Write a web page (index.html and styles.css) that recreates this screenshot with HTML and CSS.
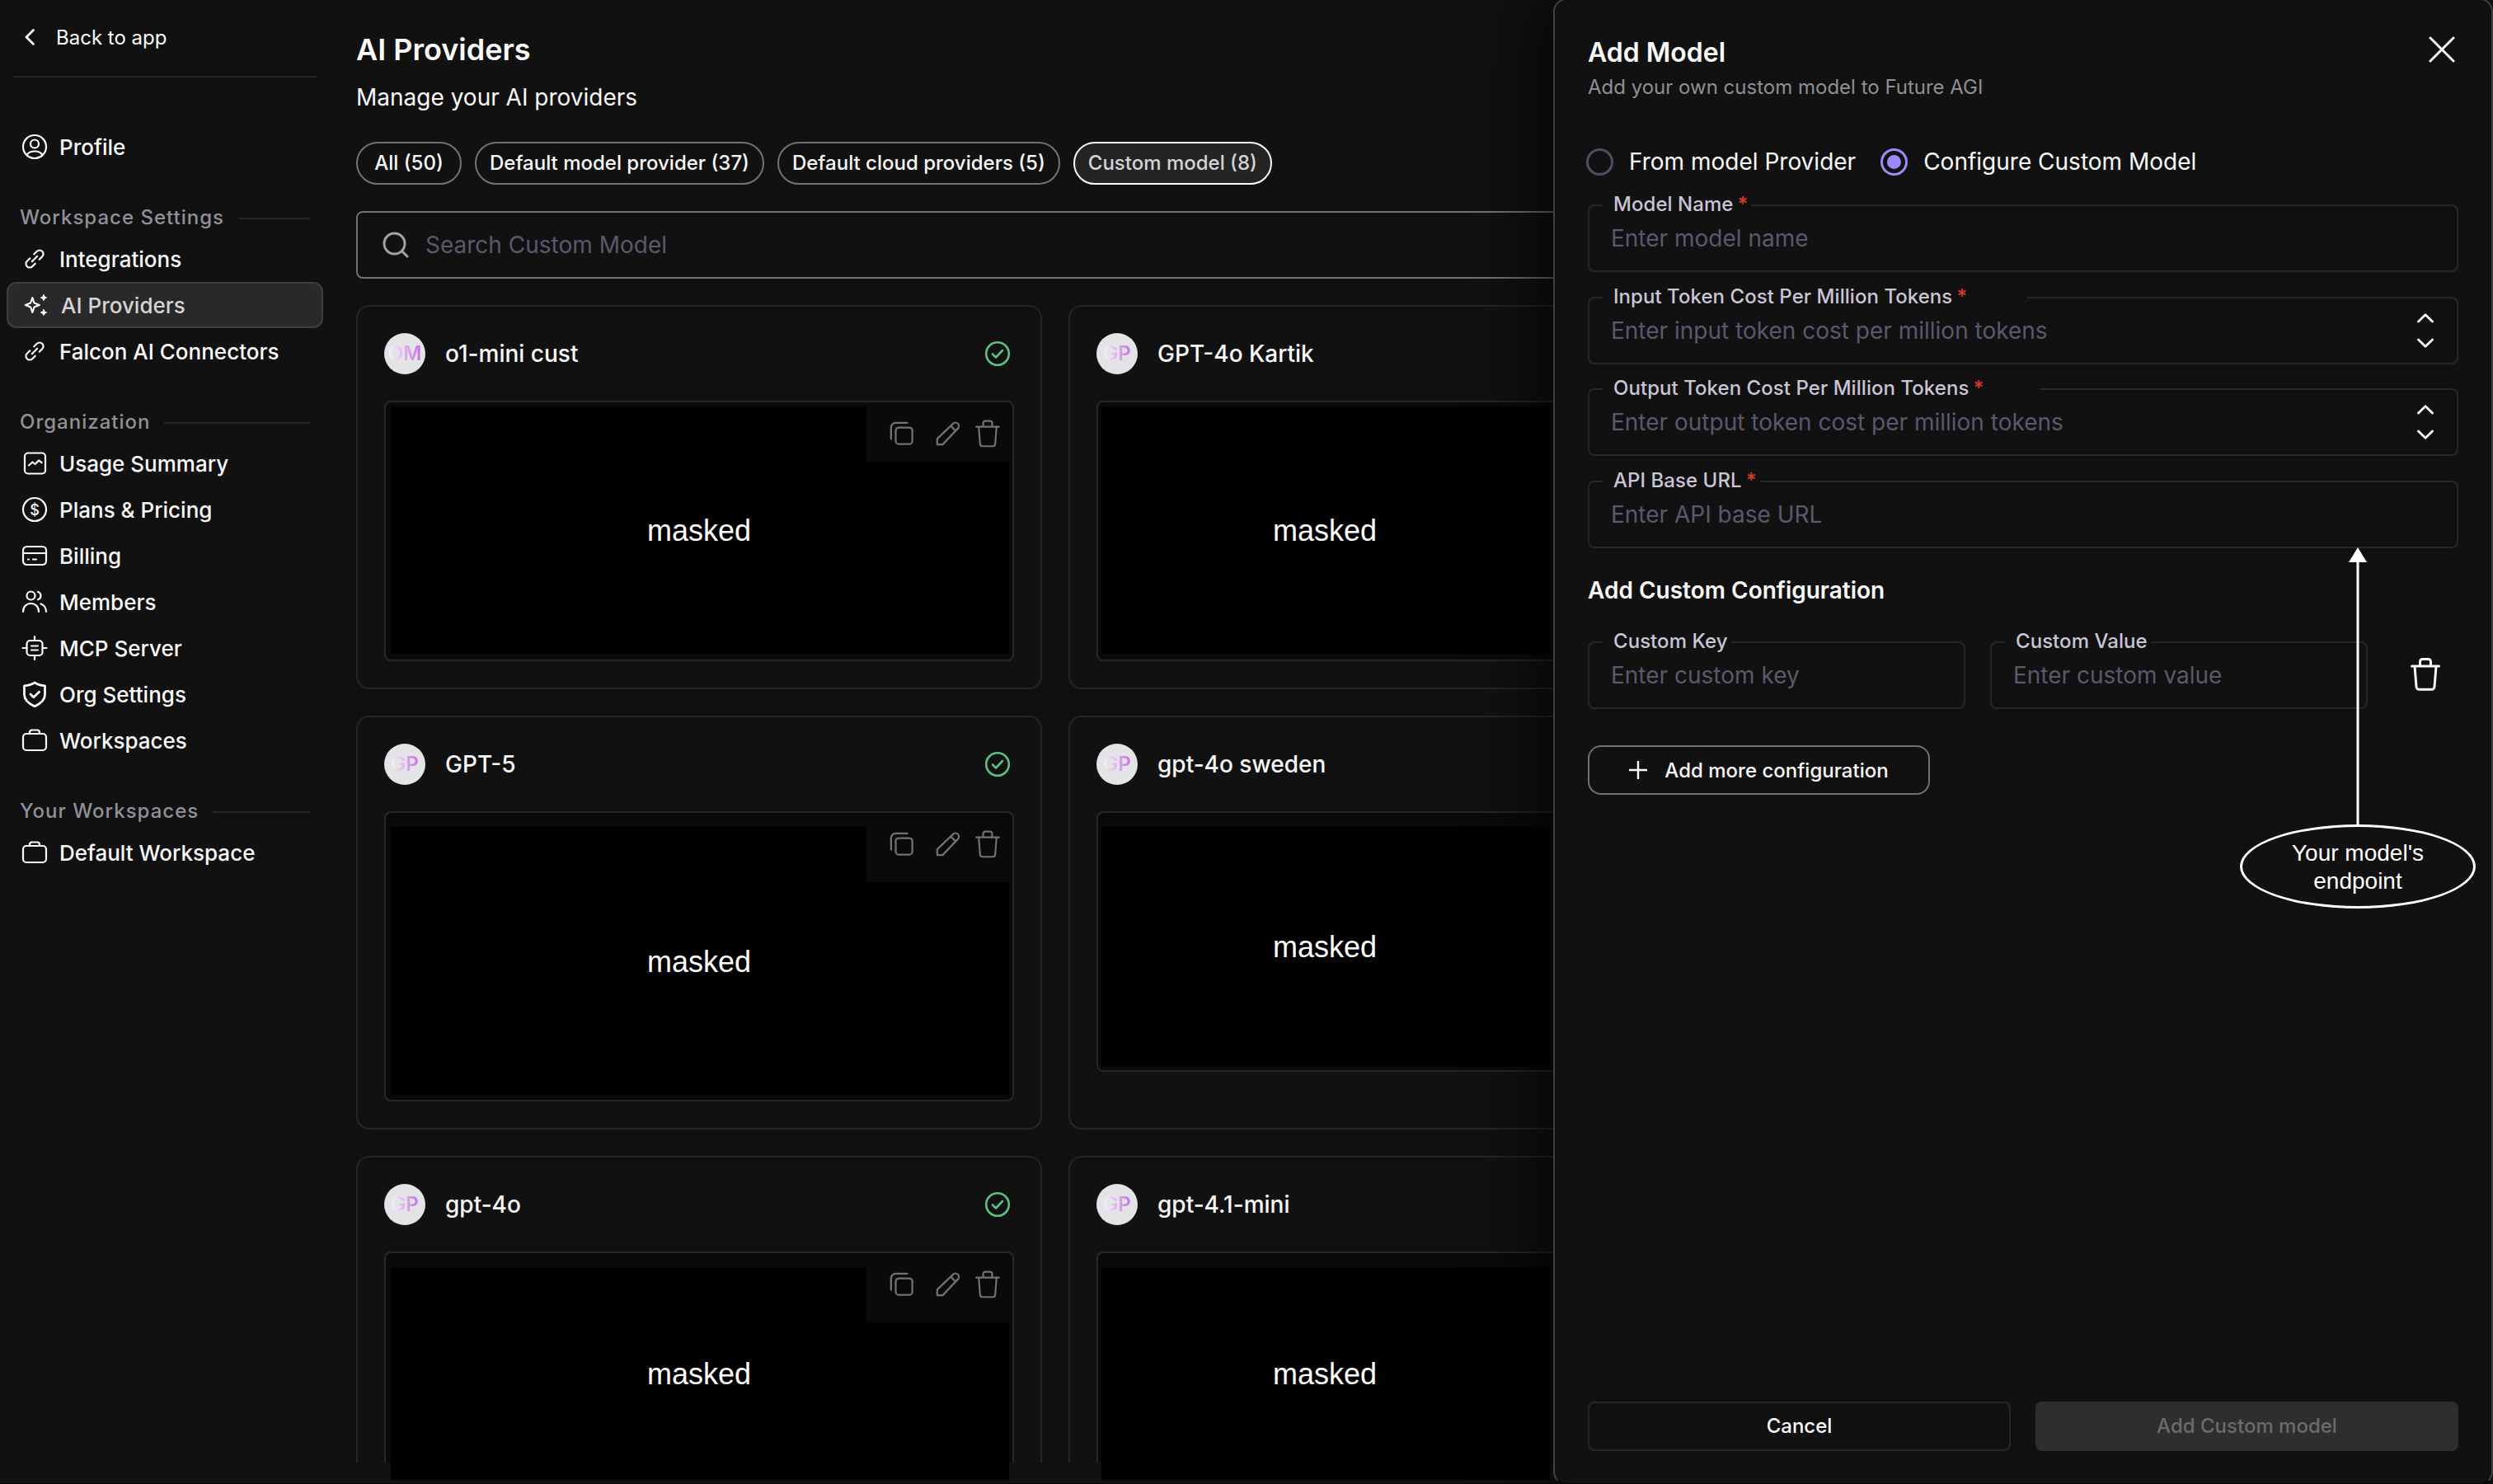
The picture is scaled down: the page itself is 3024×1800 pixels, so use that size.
FILE: index.html
```html
<!DOCTYPE html>
<html lang="en">
<head>
  <meta charset="UTF-8">
  <meta name="viewport" content="width=device-width, initial-scale=1.0">
  <title>AI Providers</title>
  <link rel="stylesheet" href="styles.css">
</head>
<body>
  <!-- icon sprite -->
  <svg class="sprite" width="0" height="0">
    <symbol id="i-link" viewBox="0 0 32 32">
      <g transform="rotate(-45 16 16)">
        <path d="M12.500 20.500H7.500a4.500 4.500 0 0 1 0-9h5"/>
        <path d="M19.500 11.500h5a4.500 4.500 0 0 1 0 9h-5"/>
        <path d="M11.500 16h9"/>
      </g>
    </symbol>
    <symbol id="i-case" viewBox="0 0 32 32">
      <rect x="2" y="8" width="28" height="20" rx="4"/>
      <path d="M10 8V6.500a3 3 0 0 1 3-3h6a3 3 0 0 1 3 3V8"/>
    </symbol>
    <symbol id="i-check" viewBox="0 0 32 32">
      <circle cx="16" cy="16" r="13.800"/>
      <path d="M10 16.500l4 4 8-8.500"/>
    </symbol>
    <symbol id="i-copy" viewBox="0 0 32 32">
      <path d="M2 23V8a6 6 0 0 1 6-6h15"/>
      <rect x="8" y="8" width="21.500" height="21.500" rx="4"/>
    </symbol>
    <symbol id="i-pencil" viewBox="0 0 32 32">
      <path d="M2 30v-7.500L22.500 3a4.300 4.300 0 0 1 6.200 6.200L9 30H2zM19.500 6l6.500 6.500"/>
    </symbol>
    <symbol id="i-trash" viewBox="0 0 36 40">
      <path d="M1.500 10h33M5 10l2 25a3.500 3.500 0 0 0 3.500 3.300h15a3.500 3.500 0 0 0 3.500-3.300l2-25M11.500 10V4.500a3 3 0 0 1 3-3h7a3 3 0 0 1 3 3V10"/>
    </symbol>
    <symbol id="i-spin" viewBox="0 0 20 42">
      <path d="M1.500 10L10 1.800l8.500 8.200M1.500 32l8.500 8.200 8.500-8.200"/>
    </symbol>
  </svg>

  <aside class="sidebar">
    <a class="back">
      <svg class="back-icon" viewBox="0 0 12 20"><path d="M10.500 1.500L2 10l8.500 8.500"/></svg>
      Back to app
    </a>
    <nav class="nav">
      <a class="nav-item">
        <svg class="icon" viewBox="0 0 32 32">
          <circle cx="16" cy="16" r="14"/><circle cx="16" cy="12.500" r="5"/>
          <path d="M6.500 26c2-3.500 5-4.500 9.500-4.500s7.500 1 9.500 4.500"/>
        </svg>
        Profile
      </a>

      <div class="nav-label">Workspace Settings</div>
      <a class="nav-item"><svg class="icon"><use href="#i-link"/></svg>Integrations</a>
      <a class="nav-item active">
        <svg class="icon" viewBox="0 0 32 32">
          <path d="M13.300 7.200l2.200 6.300 6.300 2.500-6.300 2.500-2.200 6.300-2.200-6.300L4.800 16l6.300-2.500z"/>
          <path class="solid" d="M27 3.500l1.200 2.400L30.600 7l-2.400 1.200L27 10.500l-1.200-2.300L23.400 7l2.400-1.100zM27 21.500l1.200 2.400 2.400 1.100-2.400 1.200-1.200 2.300-1.200-2.300-2.400-1.200 2.400-1.100z"/>
        </svg>
        AI Providers
      </a>
      <a class="nav-item"><svg class="icon"><use href="#i-link"/></svg>Falcon AI Connectors</a>

      <div class="nav-label">Organization</div>
      <a class="nav-item">
        <svg class="icon" viewBox="0 0 32 32">
          <rect x="4" y="3.500" width="25" height="25" rx="4"/>
          <path d="M9 18.500l4.500-4 3 2.500 4.500-4.500 3.500 2.500"/>
        </svg>
        Usage Summary
      </a>
      <a class="nav-item">
        <svg class="icon" viewBox="0 0 32 32"><circle cx="16" cy="16" r="14"/><text x="16" y="22.500">$</text></svg>
        Plans &amp; Pricing
      </a>
      <a class="nav-item">
        <svg class="icon" viewBox="0 0 32 32">
          <rect x="2" y="5" width="28" height="22" rx="4.500"/><path d="M2 13h28M8 20.500h1M14 20.500h4"/>
        </svg>
        Billing
      </a>
      <a class="nav-item">
        <svg class="icon" viewBox="0 0 32 32">
          <circle cx="11.500" cy="8.500" r="5"/>
          <path d="M2 28c0-6 4-10 9.500-10s9.500 4 9.500 10M20 3.800a5 5 0 0 1 0 9.500M23.500 18.500c4 1.500 6.500 5 6.500 9.500"/>
        </svg>
        Members
      </a>
      <a class="nav-item">
        <svg class="icon" viewBox="0 0 32 32">
          <rect x="6.500" y="7" width="19" height="18" rx="4"/>
          <path d="M12 13.500h8M12 18.500h8M16 2v5M16 25v5M1.500 16h5M25.500 16h5"/>
        </svg>
        MCP Server
      </a>
      <a class="nav-item">
        <svg class="icon bold" viewBox="0 0 32 32">
          <path d="M16 1.800c4 2.700 8 3.700 12.500 4v11c0 6.500-5.500 10.700-12.500 14-7-3.300-12.500-7.500-12.500-14v-11c4.500-.300 8.500-1.300 12.500-4zM11 16l3.800 3.800 6.700-6.500"/>
        </svg>
        Org Settings
      </a>
      <a class="nav-item"><svg class="icon"><use href="#i-case"/></svg>Workspaces</a>

      <div class="nav-label">Your Workspaces</div>
      <a class="nav-item"><svg class="icon"><use href="#i-case"/></svg>Default Workspace</a>
    </nav>
  </aside>

  <main class="main">
    <h1 class="title">AI Providers</h1>
    <p class="subtitle">Manage your AI providers</p>
    <div class="chips">
      <button class="chip">All (50)</button>
      <button class="chip">Default model provider (37)</button>
      <button class="chip">Default cloud providers (5)</button>
      <button class="chip selected">Custom model (8)</button>
    </div>
    <div class="search">
      <svg class="search-icon" viewBox="0 0 32 32"><circle cx="14.500" cy="14.500" r="12.500"/><path d="M23.500 23.500l6.500 6.500"/></svg>
      <span>Search Custom Model</span>
    </div>

    <div class="cards">
      <section class="card">
        <header class="card-head">
          <span class="avatar"><b>OM</b></span><span class="name">o1-mini cust</span>
          <svg class="check"><use href="#i-check"/></svg>
        </header>
        <div class="code">
          <div class="mask notched">masked</div>
          <div class="actions">
            <svg class="copy"><use href="#i-copy"/></svg>
            <svg class="pencil"><use href="#i-pencil"/></svg>
            <svg class="trash"><use href="#i-trash"/></svg>
          </div>
        </div>
      </section>
      <section class="card">
        <header class="card-head">
          <span class="avatar"><b>GP</b></span><span class="name">GPT-4o Kartik</span>
        </header>
        <div class="code"><div class="mask narrow">masked</div></div>
      </section>

      <section class="card">
        <header class="card-head">
          <span class="avatar"><b>GP</b></span><span class="name">GPT-5</span>
          <svg class="check"><use href="#i-check"/></svg>
        </header>
        <div class="code tall">
          <div class="mask notched">masked</div>
          <div class="actions">
            <svg class="copy"><use href="#i-copy"/></svg>
            <svg class="pencil"><use href="#i-pencil"/></svg>
            <svg class="trash"><use href="#i-trash"/></svg>
          </div>
        </div>
      </section>
      <section class="card">
        <header class="card-head">
          <span class="avatar"><b>GP</b></span><span class="name">gpt-4o sweden</span>
        </header>
        <div class="code lower"><div class="mask narrow">masked</div></div>
      </section>

      <section class="card cut">
        <header class="card-head">
          <span class="avatar"><b>GP</b></span><span class="name">gpt-4o</span>
          <svg class="check"><use href="#i-check"/></svg>
        </header>
        <div class="code open">
          <div class="mask notched">masked</div>
          <div class="actions">
            <svg class="copy"><use href="#i-copy"/></svg>
            <svg class="pencil"><use href="#i-pencil"/></svg>
            <svg class="trash"><use href="#i-trash"/></svg>
          </div>
        </div>
      </section>
      <section class="card cut">
        <header class="card-head">
          <span class="avatar"><b>GP</b></span><span class="name">gpt-4.1-mini</span>
        </header>
        <div class="code open"><div class="mask narrow">masked</div></div>
      </section>
    </div>
  </main>

  <aside class="drawer">
    <header class="drawer-head">
      <div>
        <h2 class="drawer-title">Add Model</h2>
        <p class="drawer-sub">Add your own custom model to Future AGI</p>
      </div>
      <svg class="close" viewBox="0 0 32 32"><path d="M2 2l28 28M30 2L2 30"/></svg>
    </header>

    <div class="radios">
      <span class="radio"></span><span class="radio-text">From model Provider</span>
      <span class="radio on"></span><span class="radio-text">Configure Custom Model</span>
    </div>

    <div class="fields">
      <fieldset class="field">
        <legend>Model Name<i>*</i></legend>
        <span>Enter model name</span>
      </fieldset>
      <fieldset class="field">
        <legend class="wide-in">Input Token Cost Per Million Tokens<i>*</i></legend>
        <span>Enter input token cost per million tokens</span>
        <svg class="spin"><use href="#i-spin"/></svg>
      </fieldset>
      <fieldset class="field">
        <legend class="wide-out">Output Token Cost Per Million Tokens<i>*</i></legend>
        <span>Enter output token cost per million tokens</span>
        <svg class="spin"><use href="#i-spin"/></svg>
      </fieldset>
      <fieldset class="field">
        <legend>API Base URL<i>*</i></legend>
        <span>Enter API base URL</span>
      </fieldset>
    </div>

    <h3 class="section">Add Custom Configuration</h3>
    <div class="pair">
      <fieldset class="field">
        <legend>Custom Key</legend>
        <span>Enter custom key</span>
      </fieldset>
      <fieldset class="field">
        <legend>Custom Value</legend>
        <span>Enter custom value</span>
      </fieldset>
      <svg class="remove"><use href="#i-trash"/></svg>
    </div>
    <button class="add-more">
      <svg class="plus" viewBox="0 0 22 22"><path d="M11 0v22M0 11h22"/></svg>
      Add more configuration
    </button>

    <footer class="drawer-foot">
      <button class="btn">Cancel</button>
      <button class="btn disabled">Add Custom model</button>
    </footer>
  </aside>

  <!-- callout pointing at the API Base URL field -->
  <div class="callout">
    <svg class="arrow" viewBox="0 0 22 338"><path class="head" d="M11 0l11 18H0z"/><path d="M11 16v322"/></svg>
    <div class="bubble">Your model's<br>endpoint</div>
  </div>
</body>
</html>
```

FILE: styles.css
```css
* {
  box-sizing: border-box;
}

body {
  margin: 0;
  width: 3024px;
  height: 1800px;
  display: flex;
  position: relative;
  overflow: hidden;
  background: #111111;
  border-bottom: 1px solid #080305;
  color: #fafafa;
  font-family: Inter, "Liberation Sans", sans-serif;
  font-size: 26px;
}

h1, h2, h3, p {
  margin: 0;
}

button {
  font-family: inherit;
  color: inherit;
  background: none;
  padding: 0;
}

svg {
  fill: none;
  stroke: currentColor;
  stroke-width: 2.2;
  stroke-linecap: round;
  stroke-linejoin: round;
  flex: none;
}

.sprite {
  position: absolute;
}

/* Sidebar */

.sidebar {
  width: 400px;
  flex: none;
}

.back {
  display: flex;
  align-items: center;
  gap: 26px;
  height: 94px;
  margin: 0 16px;
  padding: 0 0 2px 14px;
  border-bottom: 2px solid #27272a;
  font-size: 24px;
}

.back-icon {
  width: 12px;
  height: 20px;
  stroke-width: 2.8;
}

.nav {
  padding: 56px 8px 0;
}

.nav-item {
  display: flex;
  align-items: center;
  height: 56px;
  padding-left: 18px;
  gap: 14px;
  font-weight: 500;
}

.nav-item.active {
  background: #292929;
  border: 2px solid #3f3f42;
  border-radius: 12px;
  padding-left: 16px;
  gap: 16px;
  color: #d4d4d8;
}

.nav-item.active .icon {
  color: #fafafa;
}

.icon {
  width: 32px;
  height: 32px;
}

.icon.bold {
  stroke-width: 2.8;
}

.icon .solid {
  fill: currentColor;
  stroke-width: 1;
}

.icon text {
  fill: currentColor;
  stroke: none;
  font-size: 18px;
  text-anchor: middle;
}

.nav-label {
  display: flex;
  align-items: center;
  gap: 17px;
  height: 46px;
  margin: 34px 16px 0 16px;
  font-size: 24px;
  font-weight: 500;
  letter-spacing: 1px;
  color: #938f98;
}

.nav-label::after {
  content: "";
  flex: 1;
  height: 2px;
  margin-top: 4px;
  background: #27272a;
}

/* Main */

.main {
  width: 2592px;
  flex: none;
  padding: 38px 0 0 32px;
}

.title {
  font-size: 36px;
  font-weight: 600;
  line-height: 44px;
}

.subtitle {
  margin-top: 14px;
  font-size: 28px;
  line-height: 44px;
}

.chips {
  display: flex;
  gap: 16px;
  margin-top: 32px;
}

.chip {
  height: 52px;
  min-width: 128px;
  padding: 0 16px 1px;
  border: 2px solid #71717a;
  border-radius: 26px;
  font-size: 24px;
  font-weight: 500;
}

.chip.selected {
  background: #242424;
  border-color: #fafafa;
  color: #d4d4d8;
}

.search {
  display: flex;
  align-items: center;
  gap: 20px;
  width: 1696px;
  height: 82px;
  margin-top: 32px;
  padding: 0 0 1px 30px;
  border: 2px solid #71717a;
  border-radius: 8px;
  font-size: 28px;
  color: #5b586d;
}

.search-icon {
  width: 32px;
  height: 32px;
  stroke-width: 3;
  color: #a1a1aa;
}

.cards {
  display: grid;
  grid-template-columns: 832px 832px;
  grid-template-rows: 466px 502px 372px;
  gap: 32px;
  margin-top: 32px;
}

.card {
  padding: 32px;
  border: 2px solid #27272a;
  border-radius: 16px;
}

.card.cut {
  padding-bottom: 0;
  border-bottom: 0;
  border-radius: 16px 16px 0 0;
}

.card-head {
  display: flex;
  align-items: center;
  gap: 24px;
  height: 50px;
  margin-bottom: 32px;
}

.avatar {
  display: flex;
  align-items: center;
  justify-content: center;
  width: 50px;
  height: 50px;
  padding-bottom: 1px;
  border-radius: 50%;
  background: #e4e4e7;
}

.avatar b {
  font-size: 24px;
  font-weight: 600;
  background: linear-gradient(90deg, #fcf6fd, #dca8ef 55%, #c06fe8);
  background-clip: text;
  -webkit-background-clip: text;
  color: transparent;
}

.name {
  flex: 1;
  font-size: 28px;
  font-weight: 500;
}

.check {
  width: 32px;
  height: 32px;
  margin-right: 4px;
  stroke-width: 2.6;
  color: #5ac083;
}

.code {
  position: relative;
  height: 316px;
  border: 2px solid #27272a;
  border-radius: 8px;
  background: #0a0a0a;
}

.code.tall {
  height: 352px;
}

.code.open {
  height: 256px;
  border-bottom: 0;
  border-radius: 8px 8px 0 0;
}

/* black cover, open at the top right for the action icons */
.mask {
  position: absolute;
  left: 6px;
  top: 5px;
  width: 750px;
  height: 300px;
  padding: 2px 2px 0 0;
  display: flex;
  align-items: center;
  justify-content: center;
  background: #000;
  color: #fff;
  font-family: "Liberation Sans", Arial, sans-serif;
  font-size: 36px;
}

.mask.notched {
  clip-path: polygon(0 0, 577px 0, 577px 67px, 100% 67px, 100% 100%, 0 100%);
}

.mask.narrow {
  left: 4px;
  width: 544px;
}

.tall .mask {
  top: 17px;
  height: 325px;
}

.lower .mask {
  top: 17px;
  height: 290px;
}

.open .mask {
  top: 17px;
  height: 258px;
}

.actions {
  position: absolute;
  top: 21px;
  right: 15px;
  display: flex;
  align-items: center;
  color: #71717a;
}

.copy, .pencil {
  width: 30px;
  height: 30px;
  stroke-width: 2.4;
}

.pencil {
  margin: 0 18px 0 26px;
}

.trash {
  width: 30px;
  height: 34px;
  stroke-width: 2.6;
}

/* Drawer */

.drawer {
  position: absolute;
  left: 1884px;
  top: -2px;
  width: 1140px;
  height: 1803px;
  display: flex;
  flex-direction: column;
  align-items: flex-start;
  padding: 36px 40px 39px;
  background: #111111;
  border: 2px solid #3f3f46;
  border-bottom-color: #080305;
  border-radius: 16px;
  box-shadow: -20px 0 80px rgba(0, 0, 0, 0.7);
}

.drawer-head {
  display: flex;
  justify-content: space-between;
  width: 100%;
}

.drawer-title {
  margin-top: 8px;
  font-size: 32px;
  font-weight: 600;
  line-height: 40px;
}

.drawer-sub {
  margin-top: 6px;
  font-size: 24px;
  line-height: 32px;
  color: #8f8f93;
}

.close {
  width: 32px;
  height: 32px;
  margin: 8px 4px 0 0;
  stroke-width: 3;
}

.radios {
  display: flex;
  align-items: center;
  height: 40px;
  margin-top: 54px;
  margin-left: -2px;
  font-size: 28px;
}

.radio {
  display: flex;
  align-items: center;
  justify-content: center;
  width: 33px;
  height: 33px;
  margin-right: 19px;
  border: 3px solid #504d5f;
  border-radius: 50%;
}

.radio-text + .radio {
  margin-left: 30px;
}

.radio.on {
  border-color: #9b8afb;
}

.radio.on::after {
  content: "";
  width: 17px;
  height: 17px;
  border-radius: 50%;
  background: #9b8afb;
}

.fields {
  width: 1056px;
  margin-top: 20px;
}

.field {
  display: flex;
  align-items: flex-start;
  position: relative;
  width: 100%;
  height: 94px;
  margin: 0;
  padding: 0 0 0 26px;
  border: 2px solid #27272a;
  border-radius: 8px;
  font-size: 28px;
  line-height: 54px;
  color: #5b586d;
}

.fields .field + .field {
  margin-top: 17.5px;
}

.field legend {
  height: 26px;
  margin-left: -10px;
  padding: 0 4px 0 13px;
  font-size: 24px;
  font-weight: 500;
  line-height: 24px;
  letter-spacing: 0.05px;
  color: #c9c5d6;
}

.field legend i {
  margin-left: 5px;
  font-style: normal;
  font-weight: 600;
  color: #d1382c;
}

.field .wide-in {
  width: 515px;
}

.field .wide-out {
  width: 530px;
}

.spin {
  width: 20px;
  height: 42px;
  margin: 6px 28px 0 auto;
  stroke-width: 2.8;
  color: #fafafa;
}

.section {
  margin-top: 31.5px;
  font-size: 28px;
  font-weight: 600;
  line-height: 40px;
}

.pair {
  display: flex;
  gap: 30px;
  margin-top: 30px;
}

.pair .field {
  width: 458px;
}

.remove {
  width: 36px;
  height: 40px;
  margin: 32px 0 0 22px;
  stroke-width: 3;
}

.add-more {
  display: flex;
  align-items: center;
  justify-content: center;
  gap: 21px;
  width: 415px;
  height: 60px;
  margin-top: 44px;
  border: 2px solid #71717a;
  border-radius: 16px;
  font-size: 24px;
  font-weight: 500;
}

.plus {
  width: 22px;
  height: 22px;
  stroke-width: 2.4;
}

.drawer-foot {
  display: flex;
  gap: 30px;
  width: 1056px;
  margin-top: auto;
}

.btn {
  flex: 1;
  height: 60px;
  padding-bottom: 1px;
  border: 2px solid #27272a;
  border-radius: 8px;
  font-size: 24px;
  font-weight: 500;
}

.btn.disabled {
  background: #2e2e2e;
  border-color: #2e2e2e;
  color: #6b6b6b;
}

/* Callout */

.callout {
  position: absolute;
  left: 2717px;
  top: 664px;
  display: flex;
  flex-direction: column;
  align-items: center;
  color: #fff;
}

.arrow {
  width: 22px;
  height: 338px;
  stroke-width: 3;
  stroke-linecap: butt;
}

.arrow .head {
  fill: currentColor;
  stroke: none;
}

.bubble {
  display: flex;
  align-items: center;
  justify-content: center;
  width: 286px;
  height: 102px;
  margin-top: -2px;
  padding-top: 2px;
  border: 3px solid #fff;
  border-radius: 50%;
  font-family: "Liberation Sans", Arial, sans-serif;
  font-size: 28px;
  line-height: 34px;
  text-align: center;
}
```
